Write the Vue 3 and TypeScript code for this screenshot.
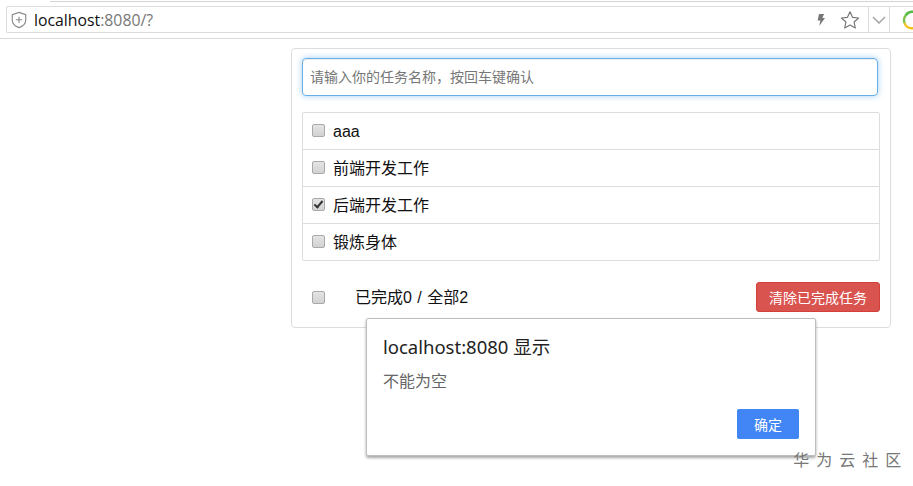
<script setup lang="ts">
interface Task { name: string; done: boolean }
const tasks: Task[] = [
  { name: 'aaa', done: false },
  { name: '前端开发工作', done: false },
  { name: '后端开发工作', done: true },
  { name: '锻炼身体', done: false },
]
</script>

<template>
  <div class="page">
    <header class="chrome">
      <div class="tabline"></div>
      <div class="address">
        <svg class="shield" width="18" height="18" viewBox="0 0 16 16" fill="none" stroke="#8a8a8a" stroke-width="1">
          <path d="M8 1.2 L14 3.2 V8 C14 11.4 11.2 13.6 8 14.8 C4.8 13.6 2 11.4 2 8 V3.2 Z" />
          <path d="M8 5 V10.6 M5.2 7.8 H10.8" />
        </svg>
        <span class="url"><span class="host">localhost</span>:8080/?</span>
        <span class="spacer"></span>
        <svg class="bolt" width="10" height="14" viewBox="0 0 10 14"><path d="M3 1 H8 L6.4 5 H9 L3.2 13 L4.4 7.4 H1.6 Z" fill="#777" /></svg>
        <svg class="star" width="20" height="20" viewBox="0 0 20 20" fill="none" stroke="#777" stroke-width="1.2" stroke-linejoin="round">
          <path d="M10 1.8 L12.5 7.3 L18.6 8 L14.1 12 L15.3 18 L10 15 L4.7 18 L5.9 12 L1.4 8 L7.5 7.3 Z" />
        </svg>
        <div class="chev">
          <svg width="14" height="8" viewBox="0 0 14 8" fill="none" stroke="#a8a8a8" stroke-width="1.6"><path d="M1 1 L7 7 L13 1" /></svg>
        </div>
        <div class="logo">
          <svg width="18" height="20" viewBox="0 0 18 20" fill="none" stroke-width="2.4">
            <path d="M16 4.6 A7.5 7.5 0 0 0 3.6 5.6" stroke="#58b947" />
            <path d="M3.6 5.6 A7.5 7.5 0 0 0 2.6 13" stroke="#7cc24a" />
            <path d="M2.6 13 A7.5 7.5 0 0 0 15.6 15.5" stroke="#f3c21c" />
          </svg>
        </div>
      </div>
    </header>

    <main class="main">
      <section class="panel">
        <div class="input">请输入你的任务名称，按回车键确认</div>
        <ul class="list">
          <li v-for="t in tasks" :key="t.name" class="row">
            <input type="checkbox" class="check" :checked="t.done" />
            <span class="task-name">{{ t.name }}</span>
          </li>
        </ul>
        <div class="footer">
          <input type="checkbox" class="check" />
          <span class="count">已完成0 / 全部2</span>
          <span class="spacer"></span>
          <button class="danger">清除已完成任务</button>
        </div>
      </section>
    </main>

    <div class="dialog">
      <div class="dlg-title">localhost:8080 显示</div>
      <div class="dlg-msg">不能为空</div>
      <div class="dlg-actions"><button class="ok">确定</button></div>
    </div>

    <div class="mark">华 为 云 社 区</div>
  </div>
</template>

<style>
html, body { margin: 0; background: #fff; }
</style>

<style scoped>
.page {
  position: relative;
  width: 913px;
  height: 486px;
  overflow: hidden;
  background: #fff;
  color: #111;
  font-family: "Liberation Sans", "Noto Sans CJK SC", sans-serif;
  font-size: 14px;
}
.chrome {
  height: 38px;
  border-bottom: 1px solid #d9d9d9;
  box-sizing: content-box;
}
.tabline {
  height: 1px;
  margin-left: 50px;
  border-bottom: 1px solid #d4d4d4;
}
.address {
  margin: 4px 0 0 6px;
  height: 25px;
  display: flex;
  align-items: center;
  border: 1px solid #dcdcdc;
  border-right: none;
  border-radius: 2px 0 0 2px;
}
.shield { margin-left: 3px; }
.url {
  margin-left: 6px;
  font-family: "Open Sans", "Noto Sans", sans-serif;
  font-size: 15.8px;
  color: #777;
}
.host { color: #111; }
.spacer { flex: 1; }
.bolt { margin-right: 14px; }
.star { margin-right: 8px; }
.chev {
  width: 20px;
  height: 25px;
  display: flex;
  align-items: center;
  justify-content: center;
  border-left: 1px solid #dcdcdc;
  border-right: 1px solid #dcdcdc;
}
.logo {
  width: 23px;
  height: 20px;
  padding-left: 12px;
  box-sizing: border-box;
  overflow: hidden;
}
.main { padding: 9px 0 0 291px; }
.panel {
  box-sizing: border-box;
  width: 600px;
  height: 280px;
  padding: 9px 10px 0 10px;
  border: 1px solid #ddd;
  border-radius: 4px;
}
.input {
  box-sizing: border-box;
  width: 576px;
  height: 38px;
  padding: 0 7px;
  line-height: 36px;
  font-size: 14px;
  color: #777;
  border: 1px solid #66afe9;
  border-radius: 4px;
  box-shadow: inset 0 1px 1px rgba(0, 0, 0, 0.075), 0 0 6px rgba(102, 175, 233, 0.6);
}
.list {
  list-style: none;
  margin: 16px 0 0;
  padding: 0;
  width: 578px;
  box-sizing: border-box;
  border: 1px solid #ddd;
  border-radius: 2px;
}
.row {
  height: 36px;
  display: flex;
  align-items: center;
  padding-left: 9px;
  font-size: 16px;
  line-height: 22px;
  border-top: 1px solid #ddd;
}
.row:first-child { border-top: none; }
.task-name { margin-top: 2px; }
.check {
  appearance: none;
  position: relative;
  box-sizing: border-box;
  width: 13px;
  height: 13px;
  margin: 0 8px 2px 0;
  flex: none;
  background: linear-gradient(#e4e4e4, #d2d2d2);
  border: 1px solid #a9a9a9;
  border-radius: 2px;
}
.check:checked::after {
  content: "";
  position: absolute;
  left: 3px;
  top: 0;
  width: 3px;
  height: 7px;
  border: solid #333;
  border-width: 0 2px 2px 0;
  transform: rotate(40deg);
}
.footer {
  width: 578px;
  margin-top: 21px;
  height: 30px;
  display: flex;
  align-items: center;
  padding-left: 10px;
  box-sizing: border-box;
  font-size: 16px;
}
.footer .check { margin: 0; }
.count { margin-left: 30px; margin-bottom: 2px; word-spacing: 1px; }
.danger {
  width: 124px;
  height: 30px;
  padding: 0;
  color: #fff;
  font: inherit;
  font-size: 14px;
  background: #d9534f;
  border: 1px solid #d43f3a;
  border-radius: 3px;
}
.dialog {
  position: absolute;
  left: 366px;
  top: 318px;
  box-sizing: border-box;
  width: 450px;
  height: 138px;
  padding: 17px 16px 0 16px;
  background: #fff;
  border: 1px solid #bdbdbd;
  border-radius: 2px;
  box-shadow: 0 2px 3px rgba(0, 0, 0, 0.35);
  font-family: "Noto Sans", "Noto Sans CJK SC", sans-serif;
}
.dlg-title { font-size: 18.5px; line-height: 22px; color: #222; }
.dlg-msg { margin-top: 13px; font-size: 16px; line-height: 20px; color: #666; }
.dlg-actions { display: flex; justify-content: flex-end; margin-top: 18px; }
.ok {
  width: 62px;
  height: 30px;
  padding: 0;
  color: #fff;
  font: inherit;
  font-size: 14px;
  background: #4285f4;
  border: none;
  border-radius: 2px;
}
.mark {
  position: absolute;
  right: 10px;
  top: 447px;
  font-size: 16px;
  letter-spacing: 1.7px;
  color: #777;
  font-family: "Noto Sans CJK SC", sans-serif;
  white-space: pre;
}
</style>
